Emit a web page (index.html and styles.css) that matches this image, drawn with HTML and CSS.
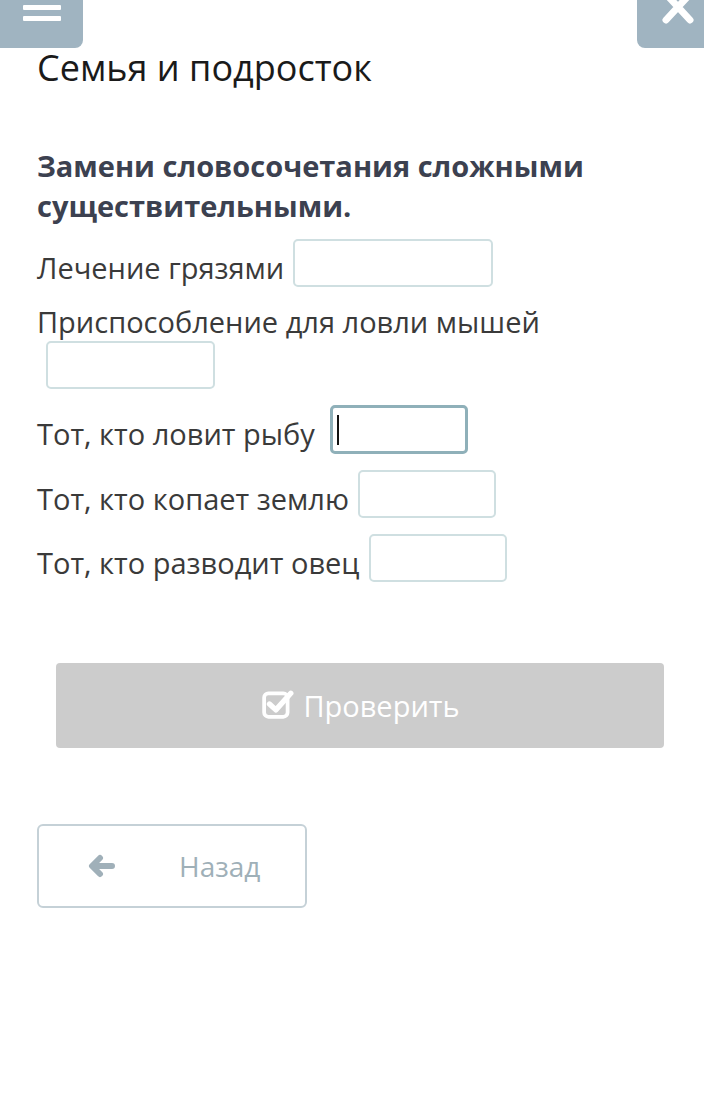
FILE: index.html
```html
<!DOCTYPE html>
<html lang="ru">
<head>
<meta charset="utf-8">
<title>Семья и подросток</title>
<link rel="stylesheet" href="styles.css">
</head>
<body>
<button class="corner corner-left" aria-label="Меню">
  <svg width="38" height="24" viewBox="0 0 38 24"><rect x="0" y="5" width="38" height="5" rx="1" fill="#fff"/><rect x="0" y="16" width="38" height="5" rx="1" fill="#fff"/></svg>
</button>
<button class="corner corner-right" aria-label="Закрыть">
  <svg width="34" height="26" viewBox="0 0 34 26"><path d="M5 -6 L29 20 M29 -6 L5 20" stroke="#fff" stroke-width="7" stroke-linecap="round"/></svg>
</button>
<main class="page">
  <h1 class="title">Семья и подросток</h1>
  <h2 class="task">Замени словосочетания сложными существительными.</h2>
  <div class="items">
    <p class="item">Лечение грязями<input class="field w200" type="text"></p>
    <p class="item">Приспособление для ловли мышей<input class="field w169" type="text"></p>
    <p class="item">Тот, кто ловит рыбу <span class="focus-wrap"><input class="field w138 focused" type="text"><span class="caret"></span></span></p>
    <p class="item">Тот, кто копает землю<input class="field w138" type="text"></p>
    <p class="item">Тот, кто разводит овец<input class="field w138" type="text"></p>
  </div>
  <button class="check">
    <svg class="check-icon" width="32" height="30" viewBox="0 0 30 28"><rect x="2" y="4" width="22" height="22" rx="4" fill="none" stroke="#fff" stroke-width="3.5"/><path d="M7 14 L13 19.5 L27 4" fill="none" stroke="#fff" stroke-width="5" stroke-linecap="round" stroke-linejoin="round"/></svg>
    <span>Проверить</span>
  </button>
  <button class="back">
    <svg width="28" height="24" viewBox="0 0 28 24"><path d="M25 12 H6 M13 4 L5 12 L13 20" fill="none" stroke="#a0b0b9" stroke-width="6" stroke-linecap="round" stroke-linejoin="round"/></svg>
    <span>Назад</span>
  </button>
</main>
</body>
</html>
```
FILE: styles.css
```css
html, body {
  margin: 0;
  padding: 0;
  background: #fff;
}
body {
  font-family: "Open Sans", "Noto Sans", sans-serif;
  color: #3a3a3a;
  width: 704px;
  min-height: 1114px;
  position: relative;
}
.corner {
  position: absolute;
  top: 0;
  height: 48px;
  border: none;
  background: #a0b4c1;
  padding: 0;
  display: flex;
  justify-content: center;
  align-items: flex-start;
}
.corner-left {
  left: 0;
  width: 83px;
  border-radius: 0 0 8px 0;
}
.corner-right {
  right: 0;
  width: 67px;
  border-radius: 0 0 0 8px;
}
.corner-right svg { margin-left: 14px; }
.page {
  padding: 46px 37px 0 37px;
}
.title {
  margin: 0;
  font-weight: 400;
  font-size: 36px;
  line-height: 43px;
  color: #1a1a1a;
}
.task {
  margin: 57px 0 0 0;
  font-weight: 700;
  font-size: 29px;
  line-height: 40px;
  color: #3c4150;
}
.items {
  margin-top: 13px;
}
.item {
  margin: 0;
  font-size: 29px;
  line-height: 38px;
  color: #3a3a3a;
}
.field {
  display: inline-block;
  vertical-align: middle;
  height: 48px;
  box-sizing: border-box;
  margin: 0 0 16px 9px;
  border: 2px solid #cfdfe1;
  border-radius: 5px;
  background: #fff;
  padding: 0;
  outline: none;
  font: inherit;
}
.w200 { width: 200px; }
.w169 { width: 169px; }
.w138 { width: 138px; }
.focus-wrap {
  position: relative;
  display: inline-block;
  vertical-align: middle;
  margin: 0 0 16px 8px;
  height: 49px;
}
.focus-wrap .field {
  margin: 0;
  height: 49px;
  vertical-align: top;
}
.focused {
  border: 3px solid #8fb0b9;
}
.caret {
  position: absolute;
  left: 7px;
  top: 10px;
  width: 2px;
  height: 30px;
  background: #111;
}
.check {
  display: flex;
  align-items: center;
  justify-content: center;
  gap: 9px;
  margin: 65px 0 0 19px;
  width: 608px;
  height: 85px;
  border: none;
  border-radius: 4px;
  background: #cccccc;
  color: #fff;
  font-family: "Open Sans", "Noto Sans", sans-serif;
  font-size: 29px;
  padding: 0 0 0 2px;
}
.check-icon { margin-top: -4px; }
.back {
  display: flex;
  align-items: center;
  margin-top: 76px;
  width: 270px;
  height: 84px;
  box-sizing: border-box;
  border: 2px solid #c5d1d7;
  border-radius: 6px;
  background: #fff;
  padding: 0 0 0 48px;
  color: #9fb0b8;
  font-family: "Open Sans", "Noto Sans", sans-serif;
  font-size: 28px;
}
.back span { margin-left: 64px; }
```
